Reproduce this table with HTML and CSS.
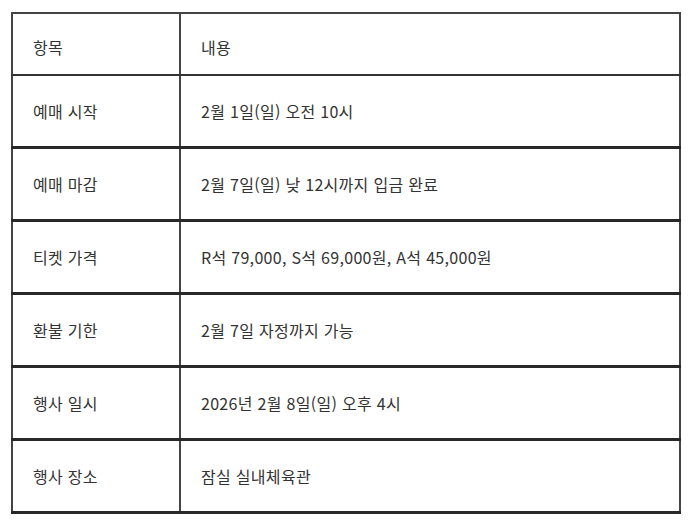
FILE: index.html
```html
<!DOCTYPE html>
<html lang="ko">
<head>
<meta charset="utf-8">
<link rel="stylesheet" href="styles.css">
</head>
<body>
<table class="info">
  <colgroup><col class="col-key"><col class="col-val"></colgroup>
  <thead>
    <tr><th>항목</th><th>내용</th></tr>
  </thead>
  <tbody>
    <tr><td>예매 시작</td><td>2월 1일(일) 오전 10시</td></tr>
    <tr><td>예매 마감</td><td>2월 7일(일) 낮 12시까지 입금 완료</td></tr>
    <tr><td>티켓 가격</td><td>R석 79,000, S석 69,000원, A석 45,000원</td></tr>
    <tr><td>환불 기한</td><td>2월 7일 자정까지 가능</td></tr>
    <tr><td>행사 일시</td><td>2026년 2월 8일(일) 오후 4시</td></tr>
    <tr><td>행사 장소</td><td>잠실 실내체육관</td></tr>
  </tbody>
</table>
</body>
</html>
```
FILE: styles.css
```css
html, body {
  margin: 0;
  padding: 0;
  background: #ffffff;
}
body {
  padding: 12px 12px 0 11px;
  font-family: "Noto Sans CJK KR", "Noto Sans", sans-serif;
  font-size: 16px;
  color: #333333;
  letter-spacing: 0.3px;
}
.info {
  border-collapse: collapse;
  table-layout: fixed;
  width: 670px;
  border: 2px solid #444444;
}
.col-key {
  width: 168px;
}
.info th, .info td {
  text-align: left;
  font-weight: 400;
  padding: 0 20px;
  border-left: 2px solid #444444;
  line-height: 22px;
}
.info th {
  height: 62px;
  padding-top: 6px;
  padding-bottom: 0;
  border-bottom: 2px solid #333333;
  box-sizing: border-box;
}
.info td {
  height: 70px;
  border-bottom: 3px solid #282828;
}
```
